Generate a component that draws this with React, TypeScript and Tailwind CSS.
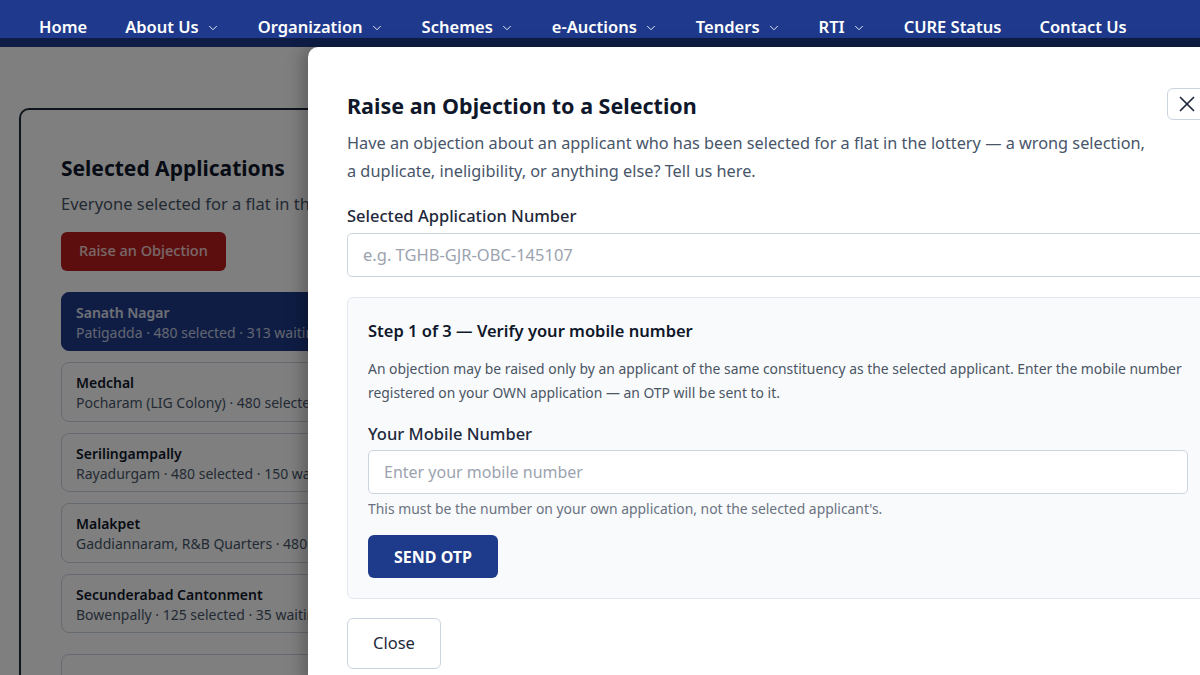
import { ChevronDown, X } from 'lucide-react';

// Top navigation entries; `menu` marks the ones with a dropdown
const navItems = [
  { label: 'Home', menu: false },
  { label: 'About Us', menu: true },
  { label: 'Organization', menu: true },
  { label: 'Schemes', menu: true },
  { label: 'e-Auctions', menu: true },
  { label: 'Tenders', menu: true },
  { label: 'RTI', menu: true },
  { label: 'CURE Status', menu: false },
  { label: 'Contact Us', menu: false },
];

const constituencies = [
  { name: 'Sanath Nagar', detail: 'Patigadda · 480 selected · 313 waiting list' },
  { name: 'Medchal', detail: 'Pocharam (LIG Colony) · 480 selected · 200 waiting list' },
  { name: 'Serilingampally', detail: 'Rayadurgam · 480 selected · 150 waiting list' },
  { name: 'Malakpet', detail: 'Gaddiannaram, R&B Quarters · 480 selected' },
  { name: 'Secunderabad Cantonment', detail: 'Bowenpally · 125 selected · 35 waiting list' },
];

export default function App() {
  const font = { fontFamily: '"Noto Sans", "Open Sans", sans-serif' };

  return (
    <div className="relative w-[1200px] h-[675px] overflow-hidden bg-white" style={font}>
      {/* Main navigation */}
      <nav className="h-[47px] bg-[#1f3a8c] flex items-start pt-[15px] pl-[39px] gap-[38px]">
        {navItems.map((item) => (
          <div key={item.label} className="flex items-center gap-[7px] text-white text-[16.5px] font-semibold leading-[24px]">
            <span>{item.label}</span>
            {item.menu && <ChevronDown size={14} strokeWidth={1.5} className="mt-[1px]" />}
          </div>
        ))}
      </nav>

      {/* Page content behind the dialog */}
      <div className="px-[19px] pt-[61px]">
        <div className="w-[420px] border-2 border-[#1e293b] rounded-[10px] pl-[40px] pt-[42px] pb-10 bg-white">
          <h2 className="text-[21px] font-bold text-[#0f172a] leading-[32px]">Selected Applications</h2>
          <p className="mt-[8px] text-[16.5px] text-[#475569] whitespace-nowrap">Everyone selected for a flat in the lottery, by constituency</p>
          <button className="mt-[15px] h-[39px] px-[18px] rounded-[6px] bg-[#b91c1c] text-[14.5px] font-medium text-white/80">
            Raise an Objection
          </button>
          <div className="mt-[21px] flex flex-col gap-[11px]">
            {constituencies.map((c, i) => (
              <div
                key={c.name}
                className={`h-[59.5px] rounded-[8px] px-[14px] pt-[10px] border ${
                  i === 0 ? 'bg-[#1e3a8a] border-[#1e3a8a]' : 'bg-white border-[#cbd5e1]'
                }`}
              >
                <div className={`text-[14px] font-semibold leading-[20px] ${i === 0 ? 'text-white/85' : 'text-[#0f172a]'}`}>{c.name}</div>
                <div className={`text-[14px] leading-[20px] whitespace-nowrap ${i === 0 ? 'text-white/75' : 'text-[#475569]'}`}>{c.detail}</div>
              </div>
            ))}
            <div className="mt-[10px] h-[44px] rounded-[8px] border border-[#cbd5e1] px-[14px] pt-[16px] text-[14px] text-[#64748b] whitespace-nowrap">
              Search by application number
            </div>
          </div>
        </div>
      </div>

      {/* Dim layer */}
      <div className="absolute left-0 right-0 top-[38px] bottom-0 bg-black/50" />

      {/* Objection dialog */}
      <div className="absolute left-[308px] top-[47px] w-[940px] h-[640px] bg-white rounded-tl-[10px] shadow-[-6px_0_16px_rgba(0,0,0,0.25)] pl-[39px] pr-[39px] pt-[44px]">
        <button className="absolute left-[859px] top-[41px] w-[40px] h-[32px] border border-[#cbd5e1] rounded-[6px] flex items-center justify-center text-[#1e293b]">
          <X size={26} strokeWidth={1.6} />
        </button>

        <h1 className="text-[21.5px] font-bold text-[#0f172a] leading-[30px]">Raise an Objection to a Selection</h1>
        <p className="mt-[8px] w-[805px] text-[16.3px] text-[#475569] leading-[28px]">
          Have an objection about an applicant who has been selected for a flat in the lottery — a wrong selection, a duplicate, ineligibility, or anything else? Tell us here.
        </p>

        <label className="block mt-[19px] text-[16.5px] font-medium text-[#1e293b] leading-[24px]">Selected Application Number</label>
        <div className="mt-[5px] h-[44px] border border-[#cbd5e1] rounded-[5px] flex items-center pl-[15px] text-[16.5px] text-[#9ca3af]">
          e.g. TGHB-GJR-OBC-145107
        </div>

        {/* Step 1: mobile verification */}
        <div className="mt-[20px] h-[302px] bg-[#f8fafc] border border-[#e2e8f0] rounded-[6px] px-[20px] pt-[21px]">
          <h3 className="text-[16.5px] font-semibold text-[#0f172a] leading-[24px]">Step 1 of 3 — Verify your mobile number</h3>
          <p className="mt-[14px] text-[13.9px] text-[#4b5563] leading-[24px]">
            An objection may be raised only by an applicant of the same constituency as the selected applicant. Enter the mobile number registered on your OWN application — an OTP will be sent to it.
          </p>
          <label className="block mt-[17px] text-[16.5px] font-medium text-[#1e293b] leading-[24px]">Your Mobile Number</label>
          <div className="mt-[4px] h-[44px] bg-white border border-[#cbd5e1] rounded-[5px] flex items-center pl-[15px] text-[16px] text-[#9ca3af]">
            Enter your mobile number
          </div>
          <p className="mt-[5px] text-[13.9px] text-[#6b7280] leading-[20px]">
            This must be the number on your own application, not the selected applicant's.
          </p>
          <button className="mt-[16px] h-[43px] w-[130px] rounded-[6px] bg-[#1e3a8a] text-white text-[16px] font-bold">
            SEND OTP
          </button>
        </div>

        <button className="mt-[19px] h-[51px] w-[94px] bg-white border border-[#cbd5e1] rounded-[6px] text-[16.5px] text-[#1e293b]">
          Close
        </button>
      </div>
    </div>
  );
}
